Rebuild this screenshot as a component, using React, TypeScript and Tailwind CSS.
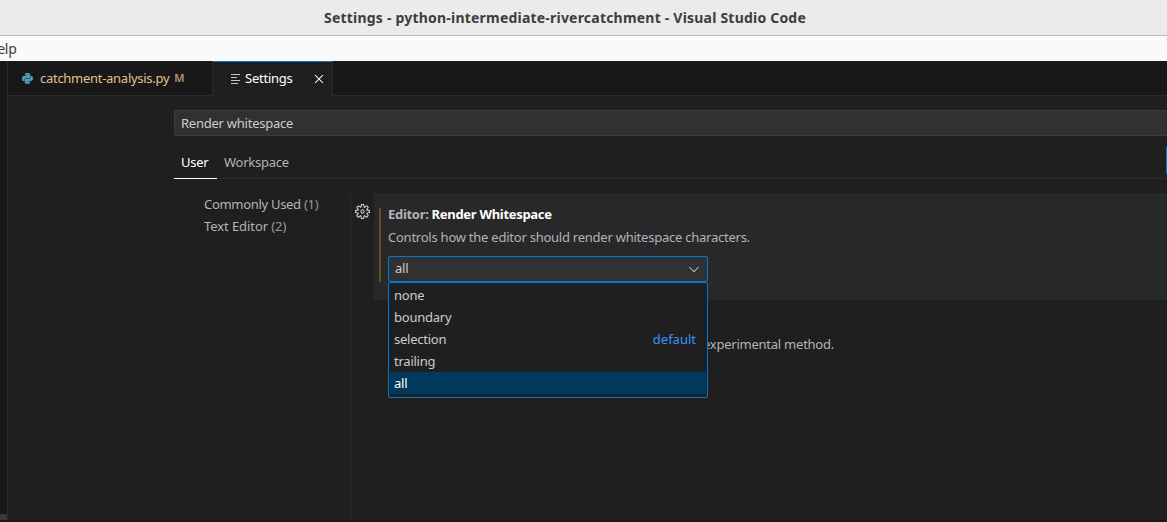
import { VscChevronDown, VscClose, VscSettingsGear } from "react-icons/vsc";

const options = ["none", "boundary", "selection", "trailing", "all"];

function PythonIcon() {
  return (
    <svg viewBox="0 0 24 24" className="size-[11px] shrink-0" fill="#519aba">
      <path d="M11.8 0C6 0 6.3 2.6 6.3 2.6v3.2h5.6v1H3.9S0 6.200 0 12s3.400 5.700 3.400 5.700h2.300v-3s-.1-3.400 3.300-3.400h5.700s3.200 0 3.200-3.100V3.100S18.300 0 11.800 0zM8.700 1.900a1 1 0 1 1 0 2 1 1 0 0 1 0-2z" />
      <path d="M12.200 24c5.800 0 5.500-2.600 5.500-2.600v-3.200h-5.600v-1h8S24 17.800 24 12s-3.400-5.700-3.400-5.700h-2.300v3s.1 3.400-3.300 3.400H9.300s-3.200 0-3.200 3.100v5.100S5.700 24 12.200 24zm3.100-1.900a1 1 0 1 1 0-2 1 1 0 0 1 0 2z" />
    </svg>
  );
}

function LinesIcon() {
  return (
    <svg viewBox="0 0 10 10" className="mb-px h-[10px] w-[10px] shrink-0" fill="#c5c5c5" shapeRendering="crispEdges">
      <path d="M0 0h9v1H0zM0 3h6v1H0zM0 6h9v1H0zM0 9h7v1H0z" />
    </svg>
  );
}

export default function App() {
  return (
    <div className="flex h-[522px] w-[1167px] flex-col overflow-hidden bg-[#1f1f1f] font-['Noto_Sans',sans-serif] text-[13px] leading-[22px] tracking-[-0.24px] whitespace-nowrap text-[#b4b4b4]">
      <header className="flex h-9 shrink-0 justify-center border-b border-[#b8b8b8] bg-[#ebebeb] pr-[37px] text-[14px] leading-[36px] font-bold tracking-[0.21px] text-[#3d3d3d]">
        <span>Settings - python-intermediate-rivercatchment - Visual Studio Code</span>
      </header>
      <nav className="flex h-[25px] shrink-0 bg-[#fafafa] text-[14px] leading-[25px] text-[#3d3d3d]">
        <span className="-ml-[13px]">Help</span>
      </nav>
      <div className="flex min-h-0 flex-1">
        <aside className="flex w-2 shrink-0 flex-col justify-end border-r border-[#2b2b2b] bg-[#181818]">
          <div className="h-1.5 bg-[#37373d]" />
        </aside>
        <main className="flex min-w-0 flex-1 flex-col">
          <div className="flex h-[35px] shrink-0 bg-[#181818]">
            <div className="flex w-[205px] items-center border-r border-b border-[#2b2b2b] pl-[14px] text-[#e2c08d]">
              <PythonIcon />
              <span className="ml-[7px] tracking-[-0.28px]">catchment-analysis.py</span>
              <span className="ml-[5px] text-[11px] font-semibold opacity-75">M</span>
            </div>
            <div className="flex w-[120px] items-center border-t border-r border-t-[#0078d4] border-r-[#2b2b2b] bg-[#1f1f1f] pl-[18px] text-white">
              <LinesIcon />
              <span className="mb-[2px] ml-[4px] w-[66px]">Settings</span>
              <VscClose className="size-4" />
            </div>
            <div className="flex-1 border-b border-[#2b2b2b]" />
          </div>
          <div className="flex min-h-0 flex-1 flex-col pt-[14px] pl-[166px]">
            <div className="h-[26px] shrink-0 rounded-l-[2px] border border-r-0 border-[#3c3c3c] bg-[#313131] pl-[6px] leading-[24px] text-[#cccccc]">
              <span>Render whitespace</span>
            </div>
            <div className="flex h-[43px] shrink-0 border-b border-[#2b2b2b]">
              <div className="-mb-px w-[43px] border-b border-white pt-[15px] pl-[7px] text-white">User</div>
              <div className="pt-[15px] pl-[7px]">Workspace</div>
              <div className="mt-[11px] ml-auto h-[27px] w-px bg-[#0078d4]" />
            </div>
            <div className="flex min-h-0 flex-1 pt-[14px]">
              <div className="w-[177px] shrink-0 border-r border-[#2b2b2b] pl-[30px]">
                <div className="tracking-[-0.3px]">Commonly Used <span className="opacity-80">(1)</span></div>
                <div className="tracking-[-0.08px]">Text Editor <span className="opacity-80">(2)</span></div>
              </div>
              <div className="w-[23px] shrink-0 pt-[11px] pl-[4px]">
                <VscSettingsGear className="size-[15px] text-[#cccccc]" />
              </div>
              <section className="min-w-0 flex-1">
                <div className="flex h-[107px] bg-[#27282a] pl-[5px]">
                  <div className="mt-[15px] h-[74px] w-[2px] bg-[#66501b]" />
                  <div className="relative ml-[7px] pt-[10px]">
                    <div className="font-bold tracking-[-0.3px]">Editor: <span className="text-white">Render Whitespace</span></div>
                    <div className="mt-[1px]">Controls how the editor should render whitespace characters.</div>
                    <div className="mt-[8px] flex h-[26px] w-[320px] items-center justify-between rounded-[2px] border border-[#0078d4] bg-[#313131] pr-[5px] pl-[6px] text-[#cccccc]">
                      <span className="mb-[2px]">all</span>
                      <VscChevronDown className="size-4" />
                    </div>
                    <div className="absolute top-[89px] left-0 w-[320px] rounded-[2px] border border-[#0078d4] bg-[#1f1f1f] px-px pt-px pb-[3px] text-[#cccccc]">
                      {options.map((o) => (
                        <div key={o} className={o === "all" ? "flex h-[22px] justify-between bg-[#04395e] pr-[10px] pl-[4px] text-white" : "flex h-[22px] justify-between pr-[10px] pl-[4px]"}>
                          <span>{o}</span>
                          {o === "selection" && <span className="tracking-normal text-[#3794ff]">default</span>}
                        </div>
                      ))}
                    </div>
                  </div>
                </div>
                <div className="pt-[33px] pl-[329px]">experimental method.</div>
              </section>
            </div>
          </div>
        </main>
      </div>
      <footer className="h-[2px] shrink-0 bg-[#1c1719]" />
    </div>
  );
}
